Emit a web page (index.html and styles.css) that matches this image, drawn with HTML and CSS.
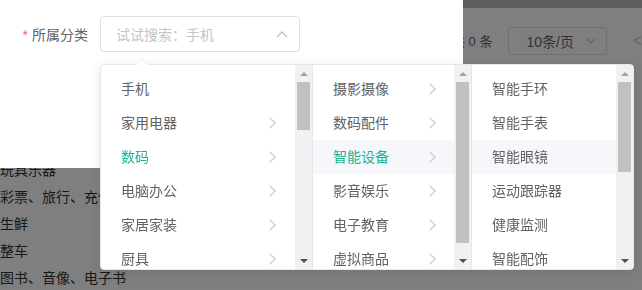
FILE: index.html
```html
<!DOCTYPE html>
<html lang="zh-CN">
<head>
  <meta charset="UTF-8">
  <meta name="viewport" content="width=device-width, initial-scale=1.0">
  <title>所属分类</title>
  <link rel="stylesheet" href="styles.css">
</head>
<body>
  <!-- 背景页面 -->
  <div class="page">
    <div class="page-top"></div>
    <div class="pagination">
      <span class="total">共 0 条</span>
      <div class="page-size">
        <span>10条/页</span>
        <svg class="size-arrow" width="10" height="6" viewBox="0 0 10 6"><path d="M1 1l4 4 4-4" fill="none" stroke="#c0c4cc" stroke-width="1.2"/></svg>
      </div>
      <span class="prev">&lt;</span>
    </div>
    <ul class="cate-list">
      <li>玩具乐器</li>
      <li>彩票、旅行、充值</li>
      <li>生鲜</li>
      <li>整车</li>
      <li>图书、音像、电子书</li>
    </ul>
  </div>

  <div class="mask"></div>

  <!-- 弹窗 -->
  <div class="dialog">
    <div class="form-item">
      <label class="form-label"><span class="required">*</span>所属分类</label>
      <div class="cascader-input">
        <span class="placeholder">试试搜索：手机</span>
        <svg class="input-arrow" width="12" height="8" viewBox="0 0 12 8"><path d="M1 7l5-5 5 5" fill="none" stroke="#c0c4cc" stroke-width="1.3"/></svg>
      </div>
    </div>
  </div>

  <!-- 级联面板 -->
  <div class="cascader-panel">
    <span class="popper-arrow"></span>

    <div class="menu menu-1">
      <ul class="menu-list">
        <li class="menu-item">手机</li>
        <li class="menu-item has-child">家用电器</li>
        <li class="menu-item has-child is-active">数码</li>
        <li class="menu-item has-child">电脑办公</li>
        <li class="menu-item has-child">家居家装</li>
        <li class="menu-item has-child">厨具</li>
      </ul>
      <div class="scrollbar">
        <span class="sb-btn up"></span>
        <div class="sb-track"><div class="sb-thumb" style="height:48px"></div></div>
        <span class="sb-btn down"></span>
      </div>
    </div>

    <div class="menu menu-2">
      <ul class="menu-list">
        <li class="menu-item has-child">摄影摄像</li>
        <li class="menu-item has-child">数码配件</li>
        <li class="menu-item has-child is-active is-hover">智能设备</li>
        <li class="menu-item has-child">影音娱乐</li>
        <li class="menu-item has-child">电子教育</li>
        <li class="menu-item has-child">虚拟商品</li>
      </ul>
      <div class="scrollbar">
        <span class="sb-btn up"></span>
        <div class="sb-track"><div class="sb-thumb" style="height:161px"></div></div>
        <span class="sb-btn down"></span>
      </div>
    </div>

    <div class="menu menu-3">
      <ul class="menu-list">
        <li class="menu-item">智能手环</li>
        <li class="menu-item">智能手表</li>
        <li class="menu-item is-hover">智能眼镜</li>
        <li class="menu-item">运动跟踪器</li>
        <li class="menu-item">健康监测</li>
        <li class="menu-item">智能配饰</li>
      </ul>
      <div class="scrollbar">
        <span class="sb-btn up"></span>
        <div class="sb-track"><div class="sb-thumb" style="height:90px"></div></div>
        <span class="sb-btn down"></span>
      </div>
    </div>
  </div>
</body>
</html>
```

FILE: styles.css
```css
/* 基础 */
* {
  margin: 0;
  padding: 0;
  box-sizing: border-box;
}

body {
  font-family: "Liberation Sans", "Noto Sans CJK SC", sans-serif;
  font-size: 14px;
  color: #606266;
  background: #fff;
  width: 642px;
  height: 290px;
  overflow: hidden;
}

ul {
  list-style: none;
}

/* 背景页面 */
.page-top {
  height: 8px;
  background: #bcbcbc;
}

.pagination {
  display: flex;
  align-items: center;
  padding: 19px 0 0 452px;
  height: 46px;
  font-size: 13px;
  color: #606266;
  white-space: nowrap;
}

.total {
  margin-right: 16px;
}

.page-size {
  width: 100px;
  height: 28px;
  border: 1px solid #dcdfe6;
  border-radius: 3px;
  display: flex;
  align-items: center;
  padding: 0 10px 0 17px;
  justify-content: space-between;
  font-size: 14px;
}

.prev {
  margin-left: 26px;
  font-size: 16px;
  color: #c0c4cc;
}

.cate-list {
  white-space: nowrap;
  margin-top: 103px;
  line-height: 27px;
  color: #303133;
  font-size: 14px;
}

.mask {
  position: fixed;
  inset: 0;
  background: rgba(0, 0, 0, 0.5);
}

/* 弹窗 */
.dialog {
  position: absolute;
  left: 0;
  top: 0;
  width: 463px;
  height: 168px;
  background: #fff;
  padding-top: 16px;
}

.form-item {
  display: flex;
  align-items: center;
}

.form-label {
  width: 100px;
  padding-right: 12px;
  text-align: right;
  color: #606266;
  font-size: 14px;
}

.required {
  color: #f56c6c;
  margin-right: 4px;
}

.cascader-input {
  width: 200px;
  height: 36px;
  border: 1px solid #dcdfe6;
  border-radius: 4px;
  display: flex;
  align-items: center;
  justify-content: space-between;
  padding: 0 11px 0 15px;
}

.placeholder {
  color: #c0c4cc;
}

/* 级联面板 */
.cascader-panel {
  position: absolute;
  left: 100px;
  top: 64px;
  display: flex;
  background: #fff;
  border: 1px solid #e4e7ed;
  border-radius: 4px;
  box-shadow: 0 2px 12px rgba(0, 0, 0, 0.1);
}

.popper-arrow {
  position: absolute;
  left: 35px;
  top: -7px;
  width: 0;
  height: 0;
  border: 6px solid transparent;
  border-top-width: 0;
  border-bottom-color: #e4e7ed;
}

.popper-arrow::after {
  content: "";
  position: absolute;
  left: -6px;
  top: 1px;
  border: 6px solid transparent;
  border-top-width: 0;
  border-bottom-color: #fff;
}

.menu {
  display: flex;
  height: 204px;
  border-right: 1px solid #e4e7ed;
}

.menu:last-child {
  border-right: none;
}

.menu-1 { width: 212px; }
.menu-2 { width: 159px; }
.menu-3 { width: 161px; }

.menu-list {
  flex: 1;
  padding: 7px 0 6px;
  overflow: hidden;
}

.menu-item {
  position: relative;
  height: 34px;
  line-height: 34px;
  padding: 0 30px 0 20px;
  white-space: nowrap;
  color: #606266;
}

.menu-item.has-child::after {
  content: "";
  position: absolute;
  right: 21px;
  top: 13px;
  width: 7px;
  height: 7px;
  border-top: 1px solid #c0c4cc;
  border-right: 1px solid #c0c4cc;
  transform: rotate(45deg);
}

.menu-2 .menu-item.has-child::after {
  right: 20px;
}

.menu-item.is-active {
  color: #1bb394;
}

.menu-item.is-hover {
  background: #f5f7fa;
}

/* 滚动条 */
.scrollbar {
  width: 17px;
  background: #f1f1f1;
  display: flex;
  flex-direction: column;
}

.sb-btn {
  height: 17px;
  display: flex;
  align-items: center;
  justify-content: center;
}

.sb-btn::before {
  content: "";
  border-left: 4px solid transparent;
  border-right: 4px solid transparent;
}

.sb-btn.up::before {
  border-bottom: 4px solid #a3a3a3;
}

.sb-btn.down::before {
  border-top: 4px solid #505050;
}

.sb-track {
  flex: 1;
  padding: 0 2px;
}

.sb-thumb {
  background: #c1c1c1;
}
```
